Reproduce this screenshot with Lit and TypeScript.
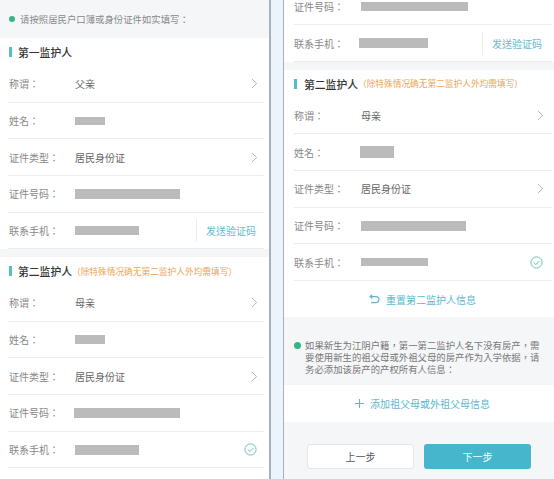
import { LitElement, html, css } from "lit";
import { customElement } from "lit/decorators.js";

type Mask = { w: number; h: number; x?: number };
const chev = html`<svg class="chev" width="7" height="11" viewBox="0 0 7 11"><path d="M1 1l4.6 4.5L1 10" fill="none" stroke="#b5b5b5" stroke-width="1"/></svg>`;
const check = html`<svg class="check" width="13" height="13" viewBox="0 0 13 13"><circle cx="6.5" cy="6.5" r="5.6" fill="none" stroke="#6cc4b4" stroke-width="1"/><path d="M3.8 6.6l2 2 3.6-3.6" fill="none" stroke="#6cc4b4" stroke-width="1"/></svg>`;

@customElement("app-root")
export class AppRoot extends LitElement {
  static styles = css`
    :host { display: flex; width: 554px; height: 479px; overflow: hidden; background: #fff;
      font-family: "Noto Sans CJK TC", "Noto Sans CJK SC", "Liberation Sans", sans-serif; font-size: 10px; color: #777; }
    .panel { flex: none; height: 479px; overflow: hidden; background: #fff; }
    .left { width: 269px; }
    .strip { flex: none; width: 12px; background: #ebf4fb; border-left: 2px solid #a8b0b8; border-right: 1px solid #a8b0b8; }
    .right { flex: 1; min-width: 0; }
    .scroll { margin-top: -11.3px; }
    .hint { height: 38px; box-sizing: border-box; background: #f5f6f8; display: flex; align-items: center; gap: 5px; padding-left: 9px; color: #888; font-size: 9.4px; }
    .dot { flex: none; width: 6px; height: 6px; border-radius: 50%; background: #33b585; }
    .title { height: 28px; display: flex; align-items: center; padding-left: 9px; font-size: 10.8px; color: #333; font-weight: 500; }
    .right .title, .right .row { margin-left: 10px; }
    .right .title { padding-left: 0; }
    .bar { width: 3px; height: 10px; background: #55bfc9; margin-right: 6px; }
    .right .bar { margin-right: 7px; }
    .warn { font-size: 8.7px; color: #eca556; font-weight: 400; }
    .row { height: 36.7px; box-sizing: border-box; margin: 0 5px 0 8px; border-bottom: 1px solid #ececec; display: flex; align-items: center; position: relative; }
    .right .row { margin-right: 2px; }
    .label { flex: none; width: 67px; padding-left: 1px; box-sizing: border-box; color: #888; }
    .right .label { padding-left: 0; width: 67px; }
    .value { flex: 1; color: #666; }
    .mask { display: block; background: #bbb; }
    .chev { flex: none; margin-right: 6px; }
    .right .chev { margin-right: 8px; }
    .check { flex: none; margin-right: 7px; }
    .right .check { margin-right: 9px; }
    .send { flex: none; width: 68px; height: 23px; box-sizing: border-box; border-left: 1px solid #ececec; padding-left: 9px; line-height: 23px; color: #66b9cf; }
    .right .send { width: 70px; }
    .band { height: 7.6px; background: #f5f6f8; }
    .action { display: flex; align-items: center; justify-content: center; color: #5cb8cc; gap: 6px; background: #fff; padding-left: 7px; }
    .reset { height: 36px; }
    .add { height: 37px; }
    .note { height: 68px; box-sizing: border-box; background: #f5f6f8; padding: 22px 9px 0 10px; display: flex; gap: 4px; color: #777; font-size: 9.4px; line-height: 12px; }
    .note .dot { margin-top: 3px; width: 7px; height: 7px; }
    .foot { height: 57px; box-sizing: border-box; background: #f5f6f8; padding: 21.5px 0 0 23px; display: flex; gap: 10px; }
    .btn { width: 107px; height: 25px; box-sizing: border-box; border-radius: 3px; display: flex; align-items: center; justify-content: center; font-size: 10px; }
    .prev { background: #fff; border: 1px solid #e6e6e6; color: #555; }
    .next { background: #45b6cc; color: #fff; }
  `;

  private row(label: string, value: unknown, trail: unknown = null) {
    return html`<div class="row"><span class="label">${label}</span><span class="value">${value}</span>${trail}</div>`;
  }
  private mask(m: Mask) {
    return html`<span class="mask" style="width:${m.w}px;height:${m.h}px;margin-left:${m.x ?? 0}px"></span>`;
  }
  private title(text: string, warn = false) {
    return html`<div class="title"><span class="bar"></span>${text}${warn ? html`<span class="warn">（除特殊情况确无第二监护人外均需填写）</span>` : null}</div>`;
  }
  private send = html`<span class="send">发送验证码</span>`;

  render() {
    return html`
      <div class="panel left">
        <div class="hint"><span class="dot"></span>请按照居民户口簿或身份证件如实填写：</div>
        ${this.title("第一监护人")}
        ${this.row("称谓：", "父亲", chev)}
        ${this.row("姓名：", this.mask({ w: 30, h: 8 }))}
        ${this.row("证件类型：", "居民身份证", chev)}
        ${this.row("证件号码：", this.mask({ w: 105, h: 10 }))}
        ${this.row("联系手机：", this.mask({ w: 64, h: 9 }), this.send)}
        <div class="band"></div>
        ${this.title("第二监护人", true)}
        ${this.row("称谓：", "母亲", chev)}
        ${this.row("姓名：", this.mask({ w: 30, h: 9 }))}
        ${this.row("证件类型：", "居民身份证", chev)}
        ${this.row("证件号码：", this.mask({ w: 106, h: 10, x: -1 }))}
        ${this.row("联系手机：", this.mask({ w: 64, h: 10 }), check)}
      </div>
      <div class="strip"></div>
      <div class="panel right">
        <div class="scroll">
          ${this.row("证件号码：", this.mask({ w: 107, h: 9 }))}
          ${this.row("联系手机：", this.mask({ w: 69, h: 10, x: -2 }), this.send)}
          <div class="band"></div>
          ${this.title("第二监护人", true)}
          ${this.row("称谓：", "母亲", chev)}
          ${this.row("姓名：", this.mask({ w: 34, h: 12, x: -1 }))}
          ${this.row("证件类型：", "居民身份证", chev)}
          ${this.row("证件号码：", this.mask({ w: 105, h: 10 }))}
          ${this.row("联系手机：", this.mask({ w: 67, h: 8 }), check)}
          <div class="action reset">
            <svg width="11" height="10" viewBox="0 0 11 10"><path d="M3.2 .8L1 2.6l2.2 1.9M1.4 2.6H7a2.9 2.9 0 0 1 0 6H2" fill="none" stroke="#5cb8cc" stroke-width="1.1"/></svg>
            <span>重置第二监护人信息</span>
          </div>
          <div class="note"><span class="dot"></span><span>如果新生为江阴户籍，第一第二监护人名下没有房产，需要使用新生的祖父母或外祖父母的房产作为入学依据，请务必添加该房产的产权所有人信息：</span></div>
          <div class="action add">
            <svg width="9" height="9" viewBox="0 0 9 9"><path d="M4.5 0v9M0 4.5h9" stroke="#5cb8cc" stroke-width="1.1" fill="none"/></svg>
            <span>添加祖父母或外祖父母信息</span>
          </div>
          <div class="foot">
            <div class="btn prev">上一步</div>
            <div class="btn next">下一步</div>
          </div>
        </div>
      </div>
    `;
  }
}
